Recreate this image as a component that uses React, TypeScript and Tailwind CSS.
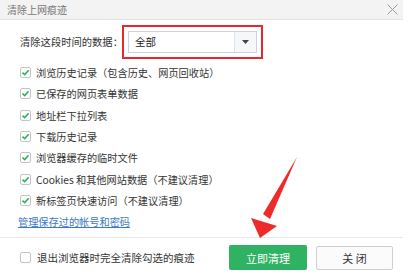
import React from 'react'

const items = [
    '浏览历史记录（包含历史、网页回收站）',
    '已保存的网页表单数据',
    '地址栏下拉列表',
    '下载历史记录',
    '浏览器缓存的临时文件',
    'Cookies 和其他网站数据（不建议清理）',
    '新标签页快速访问（不建议清理）',
]

function CheckBox({ checked }: { checked: boolean }) {
    return (
        <span className="flex h-[11px] w-[11px] shrink-0 items-center justify-center rounded-[2px] border border-[#c4c4c4] bg-white">
            {checked && (
                <svg width="9" height="9" viewBox="0 0 9 9">
                    <path d="M1.5 4.6 L3.7 6.6 L7.6 2.3" fill="none" stroke="#2fae5a" strokeWidth="1.5" />
                </svg>
            )}
        </span>
    )
}

export default function App() {
    return (
        <div className="relative h-[275px] w-[413px] bg-white text-[#333] [font-family:'Noto_Sans_CJK_SC','Noto_Sans',sans-serif]">
            <div className="w-[403px]">
                <div className="flex h-[20px] items-center justify-between border-b border-[#e4e4e4] bg-[#f3f3f3] pl-[7px] pr-[5px]">
                    <span className="text-[10px] text-[#777]">清除上网痕迹</span>
                    <svg width="11" height="11" viewBox="0 0 11 11">
                        <path d="M0.5 0.5 L10.5 10.5 M10.5 0.5 L0.5 10.5" stroke="#999" strokeWidth="1" />
                    </svg>
                </div>

                <div className="flex items-center pl-[20px] pt-[5px]">
                    <span className="w-[102px] shrink-0 whitespace-nowrap text-[10.3px]">清除这段时间的数据：</span>
                    <div className="h-[34px] w-[141px] border-2 border-[#e8262e] p-[4px]">
                        <div className="flex h-full items-center border border-[#c9d3de] bg-white">
                            <span className="flex-1 pl-[6px] text-[10.5px] text-[#222]">全部</span>
                            <span className="flex h-full w-[22px] items-center justify-center border-l border-[#dfe4ea] bg-[#f6f7f9]">
                                <svg width="7" height="4" viewBox="0 0 7 4">
                                    <path d="M0 0 L7 0 L3.5 4 Z" fill="#444" />
                                </svg>
                            </span>
                        </div>
                    </div>
                </div>

                <div className="mt-[3px] flex flex-col pl-[20px]">
                    {items.map((t) => (
                        <div key={t} className="flex h-[21.33px] items-center gap-[5px]">
                            <CheckBox checked />
                            <span className="whitespace-nowrap text-[10.2px] text-[#333]">{t}</span>
                        </div>
                    ))}
                </div>

                <div className="flex h-[20px] items-center pl-[18px]">
                    <span className="text-[10.2px] text-[#3a78c9] underline">管理保存过的帐号和密码</span>
                </div>

                <div className="mt-[6px] border-t border-[#e8e8e8]" />

                <div className="flex items-center pt-[7px]">
                    <div className="flex flex-1 items-center gap-[6px] pl-[20px]">
                        <CheckBox checked={false} />
                        <span className="whitespace-nowrap text-[10.5px] text-[#333]">退出浏览器时完全清除勾选的痕迹</span>
                    </div>
                    <button className="flex h-[25px] w-[78px] items-center justify-center rounded-[2px] bg-[#2fb363] text-[11px] text-white">
                        立即清理
                    </button>
                    <button className="ml-[9px] mr-[10px] flex h-[24px] w-[77px] items-center justify-center rounded-[2px] border border-[#cfcfcf] bg-[#fbfbfb] text-[11px] text-[#333]">
                        关 闭
                    </button>
                </div>
            </div>

            <svg className="absolute left-0 top-0" width="413" height="275" viewBox="0 0 413 275">
                <path d="M297 157 L270 219 L263 214 Z" fill="#ee2a2a" />
                <path d="M251 218 L277 226 L260 238 Z" fill="#ee2a2a" />
            </svg>
        </div>
    )
}
